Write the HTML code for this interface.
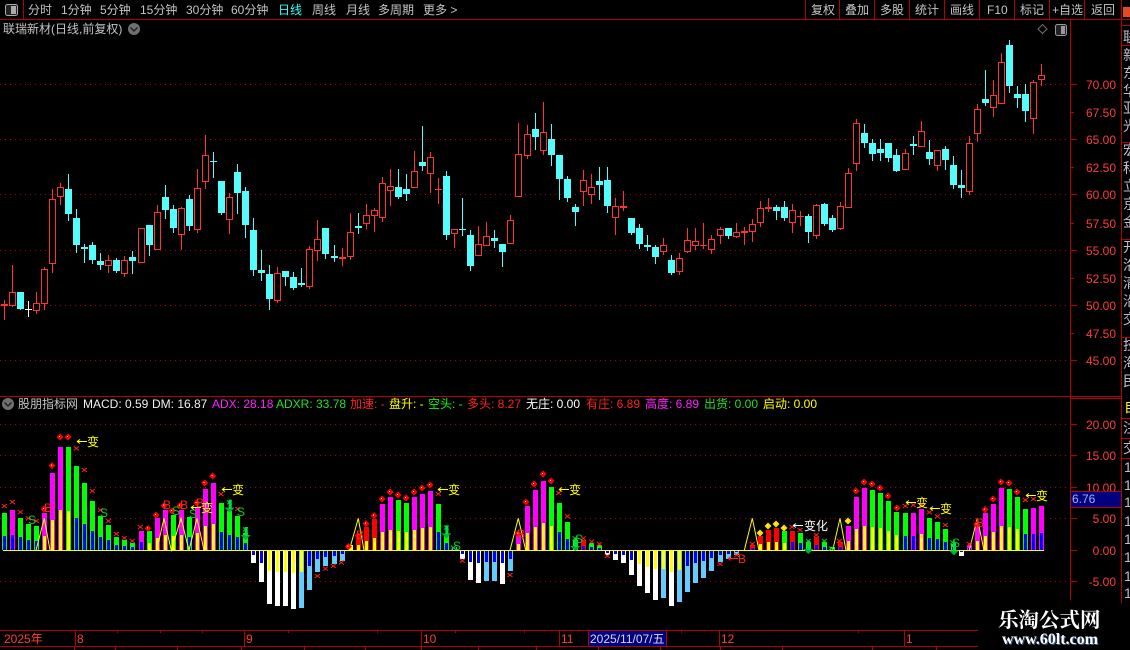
<!DOCTYPE html>
<html><head><meta charset="utf-8"><style>
html,body{margin:0;padding:0;background:#000;width:1130px;height:650px;overflow:hidden}
svg{display:block}
text{font-family:"Liberation Sans","WenQuanYi Zen Hei","Noto Sans CJK SC",sans-serif;font-size:12px}
.t{fill:#c4c4c4}.a{fill:#ff3c3c;text-anchor:end}.cj{font-size:14px;fill:#c0c0c0}
</style></head><body>
<svg id="s" width="1130" height="650" viewBox="0 0 1130 650" xmlns="http://www.w3.org/2000/svg">
<rect width="1130" height="650" fill="#000"/>
<g id="grid"></g><g id="cand"></g><g id="bars"></g><g id="marks"></g>

<g fill="none" stroke="#b40000" stroke-width="1" shape-rendering="crispEdges">
<path d="M0 19.5H1130M23.5 0V19M805.5 0V19M839.5 0V19M874.5 0V19M909.5 0V19M944.5 0V19M979.5 0V19M1014.5 0V19M1049.5 0V19M1084.5 0V19"/>
<path d="M1070.5 20V600M1121.5 0V610M0 396.5H1122M1070 398.5H1122"/>
<path d="M1122 25.5H1130M1122 45.5H1130M1122 142.5H1130M1122 239.5H1130M1122 337.5H1130M1122 418.5H1130M1122 438.5H1130M1122 458.5H1130"/>
<path d="M1071 84.5H1077M1071 112.5H1074M1071 139.5H1077M1071 167.5H1074M1071 194.5H1077M1071 223.5H1074M1071 250.5H1077M1071 278.5H1074M1071 305.5H1077M1071 333.5H1074M1071 360.5H1077"/>
<path d="M1071 424.5H1077M1071 455.5H1077M1071 487.5H1077M1071 518.5H1077M1071 550.5H1077M1071 581.5H1077"/>
</g>

<g>
<rect x="5.5" y="4.5" width="12" height="11" rx="2" fill="#222" stroke="#aaa"/><rect x="11" y="6" width="5" height="8" fill="#aaa"/>
<text x="28" y="14" class="t">分时</text><text x="61" y="14" class="t">1分钟</text><text x="100" y="14" class="t">5分钟</text><text x="140" y="14" class="t">15分钟</text><text x="186" y="14" class="t">30分钟</text><text x="231" y="14" class="t">60分钟</text>
<text x="278" y="14" fill="#30ffff">日线</text><text x="312" y="14" class="t">周线</text><text x="346" y="14" class="t">月线</text><text x="378" y="14" class="t">多周期</text><text x="423" y="14" class="t">更多 &gt;</text>
<text x="811" y="14" class="t">复权</text><text x="845" y="14" class="t">叠加</text><text x="880" y="14" class="t">多股</text><text x="915" y="14" class="t">统计</text><text x="950" y="14" class="t">画线</text><text x="987" y="14" class="t">F10</text><text x="1020" y="14" class="t">标记</text><text x="1052" y="14" class="t">+自选</text><text x="1091" y="14" class="t">返回</text>
<rect x="1123" y="7" width="7" height="10" fill="#e04a28"/>
<text x="3" y="33" class="t">联瑞新材(日线,前复权)</text>
<circle cx="134" cy="29" r="6" fill="#707070"/><path d="M130.500 27.500L134 31L137.500 27.500" fill="none" stroke="#222" stroke-width="1.500"/>
<path d="M1042.500 24.500L1047 29L1042.500 33.500L1038 29Z" fill="none" stroke="#707070"/>
<rect x="1055.500" y="24.500" width="11" height="11" rx="2" fill="#222" stroke="#999"/><rect x="1061" y="26" width="4" height="8" fill="#999"/>
</g>

<g>
<text class="a" x="1116" y="89">70.00</text><text class="a" x="1116" y="117">67.50</text><text class="a" x="1116" y="144">65.00</text><text class="a" x="1116" y="172">62.50</text><text class="a" x="1116" y="199">60.00</text><text class="a" x="1116" y="228">57.50</text><text class="a" x="1116" y="255">55.00</text><text class="a" x="1116" y="283">52.50</text><text class="a" x="1116" y="310">50.00</text><text class="a" x="1116" y="338">47.50</text><text class="a" x="1116" y="365">45.00</text>
<text class="a" x="1116" y="429">20.00</text><text class="a" x="1116" y="460">15.00</text><text class="a" x="1116" y="492">10.00</text><text class="a" x="1116" y="523">5.00</text><text class="a" x="1116" y="555">0.00</text><text class="a" x="1116" y="586">-5.00</text>
<rect x="1071" y="492" width="50" height="15" fill="#000080"/><path d="M1071 491.500H1121M1071 507.500H1121" stroke="#b40000" shape-rendering="crispEdges"/>
<text x="1072" y="503" fill="#9db4e8">6.76</text>
</g>

<g clip-path="url(#cs)">
<clipPath id="cs"><rect x="1122" y="20" width="8" height="590"/></clipPath>
<text class="cj" x="1123" y="42">联</text><text class="cj" x="1123" y="60">新</text><text class="cj" x="1123" y="78">东</text><text class="cj" x="1123" y="96">华</text><text class="cj" x="1123" y="113">亚</text><text class="cj" x="1123" y="131">光</text><text class="cj" x="1123" y="155">宏</text><text class="cj" x="1123" y="173">科</text><text class="cj" x="1123" y="191">立</text><text class="cj" x="1123" y="209">京</text><text class="cj" x="1123" y="227">金</text><text class="cj" x="1123" y="252">开</text><text class="cj" x="1123" y="270">洛</text><text class="cj" x="1123" y="288">清</text><text class="cj" x="1123" y="306">沿</text><text class="cj" x="1123" y="324">交</text><text class="cj" x="1123" y="350">技</text><text class="cj" x="1123" y="368">海</text><text class="cj" x="1123" y="386">民</text>
<text class="cj" x="1124" y="412" style="fill:#ffff00">自</text><text class="cj" x="1123" y="433">注</text><text class="cj" x="1123" y="453">交</text>
<text class="cj" x="1124" y="472">1</text><text class="cj" x="1124" y="490">1</text><text class="cj" x="1124" y="507">1</text><text class="cj" x="1124" y="526">1</text><text class="cj" x="1124" y="544">1</text><text class="cj" x="1124" y="562">1</text><text class="cj" x="1124" y="581">1</text><text class="cj" x="1124" y="598">1</text>
</g>

<g>
<circle cx="8" cy="404" r="6" fill="#707070"/><path d="M4.500 402.500L8 406L11.500 402.500" fill="none" stroke="#222" stroke-width="1.500"/>
<text x="18" y="408" class="t">股朋指标网</text>
<text x="83" y="408" fill="#f0f0f0">MACD: 0.59</text><text x="152" y="408" fill="#f0f0f0">DM: 16.87</text>
<text x="212" y="408" fill="#ff20ff">ADX: 28.18</text><text x="276" y="408" fill="#20e020">ADXR: 33.78</text>
<text x="350" y="408" fill="#ff2020">加速: -</text><text x="389" y="408" fill="#ffff00">盘升: -</text><text x="428" y="408" fill="#00ff00">空头: -</text>
<text x="467" y="408" fill="#ff2020">多头: 8.27</text><text x="526" y="408" fill="#ffffff">无庄: 0.00</text><text x="586" y="408" fill="#ff2020">有庄: 6.89</text><text x="645" y="408" fill="#ff20ff">高度: 6.89</text><text x="704" y="408" fill="#20e020">出货: 0.00</text><text x="763" y="408" fill="#ffff00">启动: 0.00</text>
</g>

<g fill="#00d020">
<text x="28" y="524">S</text><text x="100" y="517">S</text><text x="172" y="515">S</text><text x="189" y="518">S</text><text x="237" y="516">S</text><text x="453" y="550">S</text><text x="575" y="543">S</text><text x="952" y="547">S</text>
</g>
<g fill="#ff2020">
<text x="44" y="512">B</text><text x="163" y="509">B</text><text x="180" y="509">B</text><text x="196" y="507">B</text><text x="356" y="539">B</text><text x="517" y="538">B</text><text x="976" y="527">B</text>
<text x="738" y="563">B</text>
</g>
<path d="M728 558.500H738M728 558.500l3-2M728 558.500l3 2" fill="none" stroke="#ff2020"/>
<g fill="#ffff00">
<text x="87" y="446">变</text><text x="201" y="512">变</text><text x="232" y="494">变</text><text x="448" y="494">变</text><text x="569" y="494">变</text><text x="916" y="507">变</text><text x="940" y="513">变</text><text x="1036" y="500">变</text>
</g>
<path d="M77 441.500H87M77 441.500l3-2M77 441.500l3 2M191 507.500H201M191 507.500l3-2M191 507.500l3 2M222 489.500H232M222 489.500l3-2M222 489.500l3 2M438 489.500H448M438 489.500l3-2M438 489.500l3 2M559 489.500H569M559 489.500l3-2M559 489.500l3 2M906 502.500H916M906 502.500l3-2M906 502.500l3 2M930 508.500H940M930 508.500l3-2M930 508.500l3 2M1026 495.500H1036M1026 495.500l3-2M1026 495.500l3 2" fill="none" stroke="#ffff00"/>
<text x="804" y="530" fill="#ffffff">变化</text>
<path d="M793 525.500H803M793 525.500l3-2M793 525.500l3 2" fill="none" stroke="#ffffff"/>

<rect x="979" y="603" width="151" height="47" fill="#000"/>
<text x="998" y="627" style="font-family:'Noto Serif CJK SC','Liberation Serif',serif;font-size:20.500px;font-weight:700" fill="#fff">乐淘公式网</text>
<text x="1003" y="645" style="font-family:'Liberation Serif',serif;font-size:16px;font-weight:700" fill="#3a5a90">www.60lt.com</text>
<text x="1002" y="644" style="font-family:'Liberation Serif',serif;font-size:16px;font-weight:700" fill="#fff">www.60lt.com</text>

<g>
<path d="M0 630.500H978M0 646.500H978M75.500 630V646M244.500 630V646M421.500 630V646M559.500 630V646M588.500 630V646M666.500 630V646M719.500 630V646M904.500 630V646M117.500 630V633M160.500 630V633M202.500 630V633M288.500 630V633M377.500 630V633M455.500 630V633M524.500 630V633M681.500 630V633M858.500 630V633M74.500 646V650M115.500 646V650M177.500 646V650M241.500 646V650M304.500 646V650M365.500 646V650M421.500 646V650M478.500 646V650M536.500 646V650M598.500 646V650M660.500 646V650M720.500 646V650M782.500 646V650M872.500 646V650M936.500 646V650" stroke="#b40000" fill="none" shape-rendering="crispEdges"/>
<text x="4" y="643" fill="#ff3c3c">2025年</text><text x="77" y="643" fill="#ff3c3c">8</text><text x="246" y="643" fill="#ff3c3c">9</text><text x="423" y="643" fill="#ff3c3c">10</text><text x="561" y="643" fill="#ff3c3c">11</text><text x="721" y="643" fill="#ff3c3c">12</text><text x="906" y="643" fill="#ff3c3c">1</text>
<rect x="589" y="631" width="77" height="15" fill="#000080"/>
<text x="590" y="643" fill="#d8d8e8">2025/11/07/五</text>
</g>

<script>
(function(){
var NS='http://www.w3.org/2000/svg';
function el(p,n,a){var e=document.createElementNS(NS,n);for(var k in a)e.setAttribute(k,a[k]);document.getElementById(p).appendChild(e);return e}
function X(i){return Math.floor(4.3+8.042*i)}
function V(v){return Math.round(395+v/3)}
var g='';[84,139,194,250,305,360,424,455,487,518,581].forEach(function(y){g+='M0 '+(y+.5)+'H1070'});
el('grid','path',{d:g,stroke:'#a80000','stroke-dasharray':'1 4',fill:'none','shape-rendering':'crispEdges'});
var C="r300,304,306,319 r265,292,305,306 c292,292,309,309 w301,309,310,316 r292,303,310,313 r267,269,303,309 r189,199,263,272 r183,187,196,204 c174,189,214,220 c209,218,245,252 c244,247,249,262 c242,245,260,263 c253,261,265,269 r255,260,265,272 c258,260,271,272 r256,260,273,276 c251,257,261,273 r228,228,262,262 c225,225,245,255 r205,212,249,249 c185,197,210,218 c205,209,228,232 r207,208,234,249 c195,199,226,230 r169,188,229,232 r135,155,181,188 c152,161,162,177 c181,181,213,214 r193,197,219,233 c164,172,193,213 c187,191,225,237 c218,230,270,275 c250,270,273,280 c265,274,299,309 r267,273,300,302 c271,271,277,285 c272,277,288,289 c268,283,285,286 r246,249,286,288 r220,239,250,260 c228,228,254,258 c245,256,258,261 r248,257,259,265 r213,232,256,259 c213,226,228,233 r204,215,223,228 r208,210,215,231 r177,183,217,221 r169,186,190,205 c169,187,197,198 c174,189,194,200 r151,171,187,187 c126,162,166,170 r152,157,173,192 r178,189,190,203 c171,176,235,239 r229,229,233,247 c198,229,230,235 c230,235,266,270 r226,244,255,255 r222,236,245,245 c230,238,241,247 c244,244,252,266 r215,220,243,243 r123,154,196,196 r125,134,155,158 c113,129,137,149 r102,132,150,154 c124,139,155,165 c155,155,179,199 c176,179,198,201 c204,207,212,225 r170,180,191,205 r174,187,194,203 c167,181,185,199 c167,180,206,212 r198,206,217,234 r191,206,208,210 c218,218,233,234 c224,228,244,248 c235,245,247,250 c245,247,257,263 r238,245,251,254 c255,260,273,274 r253,258,271,274 r228,240,251,252 r228,241,245,249 r223,245,246,248 r235,239,249,253 r227,229,235,243 c228,228,236,238 r223,232,236,237 r227,231,233,244 r219,224,231,241 r201,208,222,226 r198,207,209,211 c205,207,211,219 c201,207,218,220 r204,210,222,232 r211,216,217,225 c214,216,232,242 r204,205,235,238 c203,204,224,225 c215,218,230,231 r202,206,228,229 r168,173,207,207 r119,123,163,170 c124,133,143,147 c139,143,154,160 c139,149,153,160 c143,143,158,161 c149,155,171,171 r149,153,169,169 c136,144,146,154 r121,131,146,146 c140,152,159,164 r150,150,165,170 c146,149,160,169 c156,165,185,188 c170,185,188,197 r136,143,191,194 r104,109,133,141 c70,99,103,105 r80,95,107,116 r53,62,103,103 c40,45,86,92 c86,94,98,107 c84,94,111,121 r80,82,118,133 r64,75,79,85".split(' ');
var col={r:'#ff3232',c:'#54fcfc',w:'#ffffff'};
C.forEach(function(s,i){var t=s[0],a=s.slice(1).split(',').map(Number),x=X(i),c=col[t];
 el('cand','rect',{x:x,y:a[0],width:1,height:a[3]-a[0]+1,fill:c,'shape-rendering':'crispEdges'});
 var h=a[2]-a[1];
 if(t=='r'&&h>=3)el('cand','rect',{x:x-2.5,y:a[1]+.5,width:6,height:h,fill:'#000',stroke:c,'shape-rendering':'crispEdges'});
 else if(t=='w')el('cand','rect',{x:x-3,y:a[1],width:7,height:1,fill:c,'shape-rendering':'crispEdges'});
 else el('cand','rect',{x:x-3,y:a[1],width:7,height:Math.max(h,1),fill:c,'shape-rendering':'crispEdges'});
});
var B="g354b423 m345b420 g369b426 g387b435 g393b438 m354y423 m234y375 m156y345 g156y348 g213b369 g264b387 g318b408 g363b426 g390b435 g426b450 g435b453 g444b456 m408b441 g408y444 m369y429 m345y420 g360y423 m345y420 g366b426 m336y414 m282y393 m264y387 g324b411 g348b420 g363b426 g414b444 w504b480 w561b504 w627y528 w633y531 w633y531 w642y534 l639y531 l585b513 l531b492 l513b486 l507b483 l498b477 y450y450 r420y450 r396y438 r372y429 m327y411 m306y405 g315y408 g324y411 m306y405 m297y399 m288y396 g327b411 g420b444 g456b456 w492b477 w555b501 w564b504 l558b501 l558b501 w567b504 l528b492 m420y447 m333y414 m285y396 m258y384 g276y393 g324b411 g381b432 g435b453 r435b453 g444b456 g450b459 w480b474 w495b477 w504b480 w540b495 w573y507 w594y516 w615y522 l609y522 w633y531 l621y525 l591b513 l564b504 l549b498 l528b489 l501b480 l492b477 l480b471 - r450b459 r423y447 r405y441 r399y441 g408y444 r408b441 g414b444 g441b456 r426b450 g441b456 g456b462 r441b456 m393y438 m305y402 m279y393 g285y396 g294y399 g318y408 g351y420 g354b423 m354b423 m342y417 g369b429 g381b432 g402b441 g447b456 w483b471 m450b459 m396y438 m354y423 m327y411 m279y393 g282y396 g306y402 g342b417 m339b417 m333b414".split(' ');
var bc={g:'#00ff00',m:'#ff00ff',r:'#ff0000',b:'#0000ff',y:'#ffff00',w:'#ffffff',l:'#66ccff'};
function bar(x,v1,v2,c,w){var a=V(v1),b=V(v2);el('bars','rect',{x:x,y:a,width:w,height:Math.max(b-a,1),fill:c,'shape-rendering':'crispEdges'})}
B.forEach(function(s,i){if(s=='-')return;var m=s.match(/^(\w)(\d+)(\w)(\d+)$/);var x=X(i)-2,c1=bc[m[1]],v=+m[2],c2=bc[m[3]],w=+m[4];
 if(v>466){bar(x,468,v,c1,5);bar(x+1,468,w,c2,3)}else{bar(x,v,466,c1,5);bar(x+1,w,466,c2,3)}});
var Z=[[36,44.3,50],[156.700,164,171.300,181,189,197,204],[349.300,358.300,364],[510,518.300,525.700],[744.300,752.300,759],[832.700,840,846],[969.300,977.300,984]];
Z.forEach(function(a){var p=[];a.forEach(function(x,j){p.push(x+','+(j%2?518.3:550.3))});el('bars','polyline',{points:p.join(' '),fill:'none',stroke:'#ffff00','stroke-width':1})});
el('bars','rect',{x:3,y:550,width:1041,height:1,fill:'#ffff00','shape-rendering':'crispEdges'});
function dot(x,y,c){el('marks','polygon',{points:(x)+','+(y-3.5)+' '+(x+3.5)+','+y+' '+x+','+(y+3.5)+' '+(x-3.5)+','+y,fill:c});el('marks','rect',{x:x-1,y:y-1,width:1,height:1,fill:'#fff'})}
[[132,342,0],[156,212,0],[180,126,0],[204,126,0],[444,400,0],[468,360,0],[492,332,0],[516,348,0],[540,332,0],[590,324,0],[614,264,0],[638,243,0],
[205,455,280],[234,422,280],[258,386,280],[282,362,280],[306,312,280],[330,291,280],[354,300,280],[378,309,280],[402,291,280],[426,279,280],[450,270,280],[714,416,280],[738,321,280],[762,267,280],[789,237,280],[813,258,280],
[48,288,840],[72,261,840],[96,267,840],[120,279,840],[144,303,840],[171,339,840],[410,388,840],[435,344,840],[459,312,840],[483,261,840],[507,264,840],[531,291,840]].forEach(function(d){dot(d[2]+d[0]/3,395+d[1]/3,'#ff0000')});
[[600,414,560],[624,393,560],[648,387,560],[672,399,560],[24,378,840]].forEach(function(d){dot(d[2]+d[0]/3,395+d[1]/3,'#ffe000')});
function xm(x,y,c){el('marks','path',{d:'M'+(x-2.5)+' '+(y-2)+'L'+(x+2.5)+' '+(y+2)+'M'+(x+2.5)+' '+(y-2)+'L'+(x-2.5)+' '+(y+2),stroke:c,fill:'none','stroke-width':1})}
[[13,333,0],[37,321,0],[61,351,0],[85,370,0],[109,378,0],[229,160,0],[253,225,0],[277,288,0],[301,345,0],[325,378,0],[349,417,0],[373,429,0],[397,438,0],[421,396,0],[663,297,0],[713,342,0],
[112,543,280],[136,521,280],[160,513,280],[184,503,280],[475,297,280],[547,497,280],[690,540,280],[836,294,280],
[22,364,560],[70,430,560],[95,440,560],[118,447,560],[142,483,560],[480,507,560],[530,480,560],[577,447,560],[696,396,560],[720,405,560],[769,420,560],[838,438,560],
[196,333,840],[220,330,840],[244,330,840],[268,352,840],[292,364,840],[316,390,840],[388,447,840],[556,315,840],[580,312,840]].forEach(function(d){xm(d[2]+d[0]/3,395+d[1]/3,'#ff2020')});
[[45,430,560],[745,438,560],[793,438,560],[814,460,560],[688,322,0],[736,403,0],[499,398,280],[520,458,280],[338,442,840]].forEach(function(d){xm(d[2]+d[0]/3,395+d[1]/3,'#00d020')});
function arr(x,y){el('marks','path',{d:'M'+(x-5)+' '+y+'H'+(x+5)+'L'+x+' '+(y+5)+'Z',fill:'#00b030'});el('marks','rect',{x:x-1,y:y-8,width:3,height:9,fill:'#00e040'})}
[[689,338,0],[737,420,0],[499,415,280],[46,453,560],[745,462,560],[342,466,840]].forEach(function(d){arr(d[2]+d[0]/3,395+d[1]/3)});
})();
</script>
</svg>
</body></html>
